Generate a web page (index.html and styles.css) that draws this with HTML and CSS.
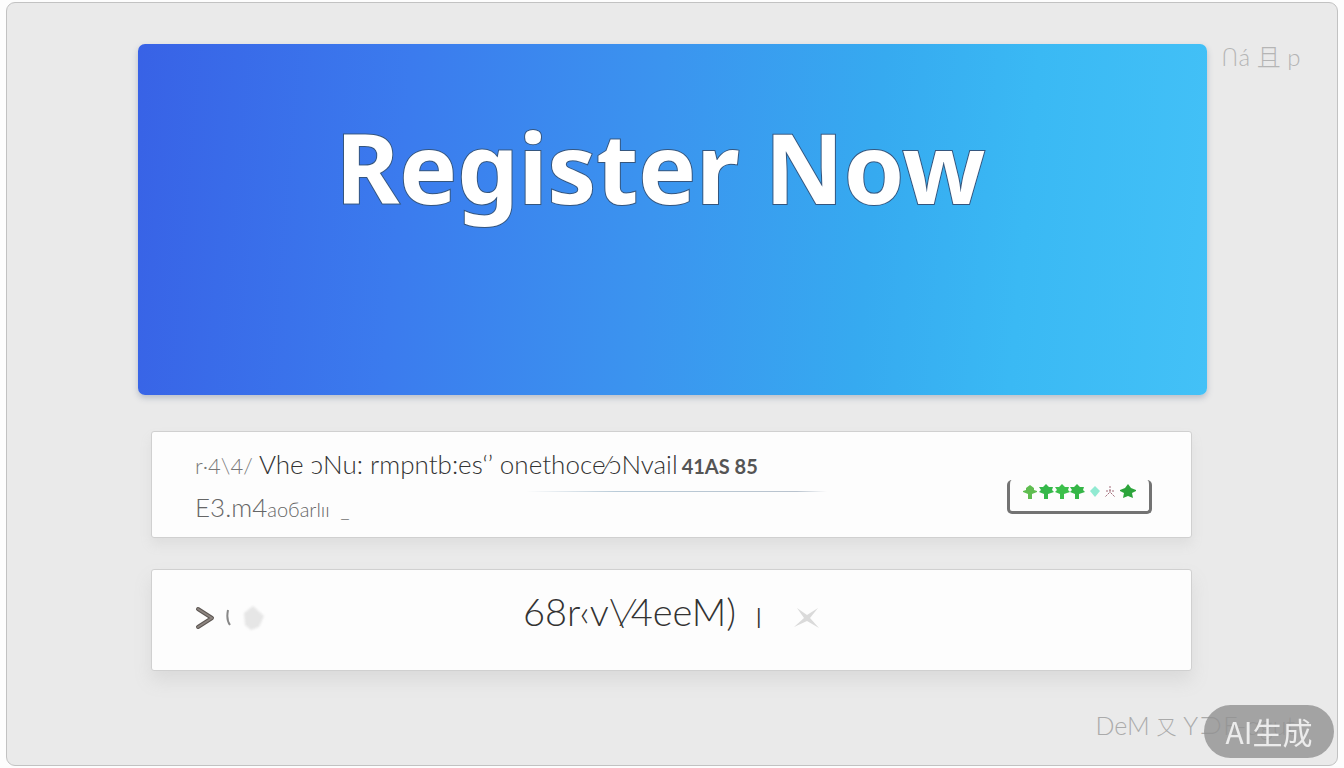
FILE: index.html
```html
<!DOCTYPE html>
<html lang="en">
<head>
<meta charset="utf-8">
<meta name="viewport" content="width=device-width, initial-scale=1">
<title>Register Now</title>
<link rel="stylesheet" href="styles.css">
</head>
<body>
<div class="panel">
  <main class="content">
    <header class="hero"><h1 class="hero-title">Register Now</h1></header>
    <section class="card details">
      <div class="details-text">
        <p class="line"><span class="soft">r·4\4/</span> <span>Vhe ɔNu: rmpntb:es‘’</span> <span>onethoce⁄ɔNvail</span><span class="code">41AS 85</span></p>
        <p class="line second">E3.m4<span class="small">aoбarlıı&nbsp; _</span></p>
      </div>
      <div class="rule"></div>
      <div class="rating">
        <svg class="marks" viewBox="0 0 118 18" aria-hidden="true">
          <defs><path id="tree" d="M8 1 11 4 15 4 14 7 16 9 10 11 10 16 6 16 6 11 1 9 3 7 1 4 5 4Z"/></defs>
          <path d="M8 2 12 5 12 7 15 8 15 9 10 11 10 16 6 16 6 11 1 9 1 8 4 7 4 5Z" fill="#5fbd50"/>
          <use href="#tree" x="16" fill="#35b84a"/><use href="#tree" x="32" fill="#3cc04b"/><use href="#tree" x="47" fill="#35b647"/>
          <path d="M73 3 78 8 73 14 68 8Z" fill="#91ead2"/>
          <g fill="none" stroke="#a36d7b" stroke-dasharray="2 1"><path d="M88 3V10M84 8H92M87 10 83 14M89 10 93 14"/></g>
          <path d="M106 1 109 5 114 7 114 8 110 10 111 15 106 13 101 15 102 10 98 8 98 7 103 5Z" fill="#2ca43b"/>
        </svg>
      </div>
    </section>
    <section class="card entry">
      <div class="entry-start">
        <button class="icon-button" type="button" aria-label="Next"><svg width="20" height="26" viewBox="0 0 20 26"><path d="M3 4 17 13 3 22" class="chevron-edge"/><path d="M3 4 17 13 3 22" class="chevron-core"/></svg></button>
        <svg width="8" height="18" viewBox="0 0 8 18" aria-hidden="true"><path d="M3 1Q1 11 5 16" fill="none" stroke="#888" stroke-width="2"/></svg>
        <svg class="gem" width="22" height="26" viewBox="0 0 22 26" aria-hidden="true"><path d="M10 1 21 11 16 22 8 25 2 20 1 8Z" fill="#e6e6e6"/></svg>
      </div>
      <div class="entry-center">
        <p class="entry-text">68r‹v\⁄4eeM)</p>
        <span class="bar">|</span>
        <button class="icon-button clear" type="button" aria-label="Clear"><svg width="26" height="22" viewBox="0 0 26 22"><path d="M3 1 13 8 24 1 16 11 25 21 13 14 0 20 10 11Z" fill="#dadada"/></svg></button>
      </div>
    </section>
  </main>
  <aside class="tag">ꓵá 且 p</aside>
  <footer class="footer">DeM <span class="glyph">又</span> Y⊃F-ɑgut</footer>
</div>
<div class="badge">AI生成</div>
</body>
</html>
```
FILE: styles.css
```css
* { box-sizing: border-box; }
body {
  margin: 0;
  padding: 2px 6px 2px;
  min-height: 100vh;
  display: flex;
  background: #fdfdfd;
  font-family: Lato, "Noto Sans CJK SC", "DejaVu Sans", sans-serif;
  color: #333;
}
h1, p { margin: 0; }
.panel {
  flex: 1;
  display: grid;
  grid-template-columns: 131px minmax(0, 1fr) 130px;
  grid-template-rows: auto 1fr;
  padding-top: 41px;
  border: 1px solid #c2c2c2;
  border-radius: 9px;
  background: #eaeaea;
}
.content { grid-column: 2; }
.hero {
  min-height: 351px;
  padding-top: 57px;
  text-align: center;
  border-radius: 7px;
  background: linear-gradient(95deg, #3862e6 0%, #3b7bee 25%, #3b94ef 48%, #36aaf0 68%, #3ab9f4 82%, #43c1f7 100%);
  box-shadow: 0 3px 6px #b8bec8;
}
.hero-title {
  padding-right: 24px;
  font: bold 97px/130px "Noto Sans", sans-serif;
  color: #fff;
  -webkit-text-stroke: 2px #35567e;
  paint-order: stroke fill;
}
.card {
  margin: 36px 15px 0 13px;
  background: #fdfdfd;
  border: 1px solid #d0d0d0;
  border-radius: 3px;
  box-shadow: 0 7px 12px #dedede;
}
.details {
  position: relative;
  display: flex;
  justify-content: space-between;
  min-height: 107px;
  padding: 15px 39px 10px 43px;
}
.line {
  font-size: 26px;
  font-weight: 300;
  line-height: 34px;
  white-space: nowrap;
}
.second { padding-top: 7px; color: #666; }
.soft { font-size: 22px; color: #777; }
.small { font-size: 20px; }
.code { padding-left: 4px; font-size: 20px; font-weight: 700; color: #555; }
.rule {
  position: absolute;
  left: 36%;
  right: 35%;
  top: 59px;
  height: 1px;
  background: linear-gradient(90deg, transparent, #b9cbd8 30%, #b9c3ce 90%, transparent);
}
.rating {
  align-self: flex-end;
  width: 145px;
  height: 34px;
  margin-bottom: 13px;
  padding: 3px 12px;
  border: 3px solid #737373;
  border-top: 0;
  border-radius: 5px;
}
.marks { display: block; width: 118px; height: 18px; }
.entry {
  display: grid;
  grid-template-columns: 328px 1fr;
  align-items: center;
  min-height: 102px;
  margin-top: 31px;
  padding-left: 43px;
  padding-bottom: 4px;
  box-shadow: 0 10px 18px #dadada;
}
.entry-start, .entry-center { display: flex; align-items: center; }
.entry-start { gap: 10px; }
.entry-center { gap: 20px; }
.entry-text { font-size: 38px; font-weight: 300; line-height: 48px; padding-bottom: 14px; white-space: nowrap; }
.bar { font-size: 22px; line-height: 28px; padding-bottom: 4px; }
.clear { padding-left: 12px; }
.icon-button { display: flex; padding-top: 0; padding-bottom: 0; padding-right: 0; border: 0; background: none; }
.icon-button:not(.clear) { padding-left: 0; }
.chevron-edge, .chevron-core { fill: none; stroke-linecap: round; stroke-linejoin: round; }
.chevron-edge { stroke: #5d5753; stroke-width: 4; }
.chevron-core { stroke: #8d8580; stroke-width: 2; }
.gem { filter: blur(1px); }
.tag {
  grid-column: 3;
  padding-left: 14px;
  font-size: 24px;
  font-weight: 300;
  line-height: 26px;
  color: #b5b5b5;
  white-space: nowrap;
}
.footer {
  grid-column: 2 / 4;
  justify-self: end;
  align-self: end;
  padding: 0 42px 22px 0;
  font-size: 25px;
  font-weight: 300;
  line-height: 32px;
  color: #aaa;
}
.glyph { font-size: 20px; }
.badge {
  position: fixed;
  right: 10px;
  bottom: 10px;
  width: 130px;
  border-radius: 27px;
  background: rgba(145, 145, 145, 0.8);
  color: #ececec;
  font: 30px/53px "Noto Sans CJK SC", sans-serif;
  text-align: center;
}
```
